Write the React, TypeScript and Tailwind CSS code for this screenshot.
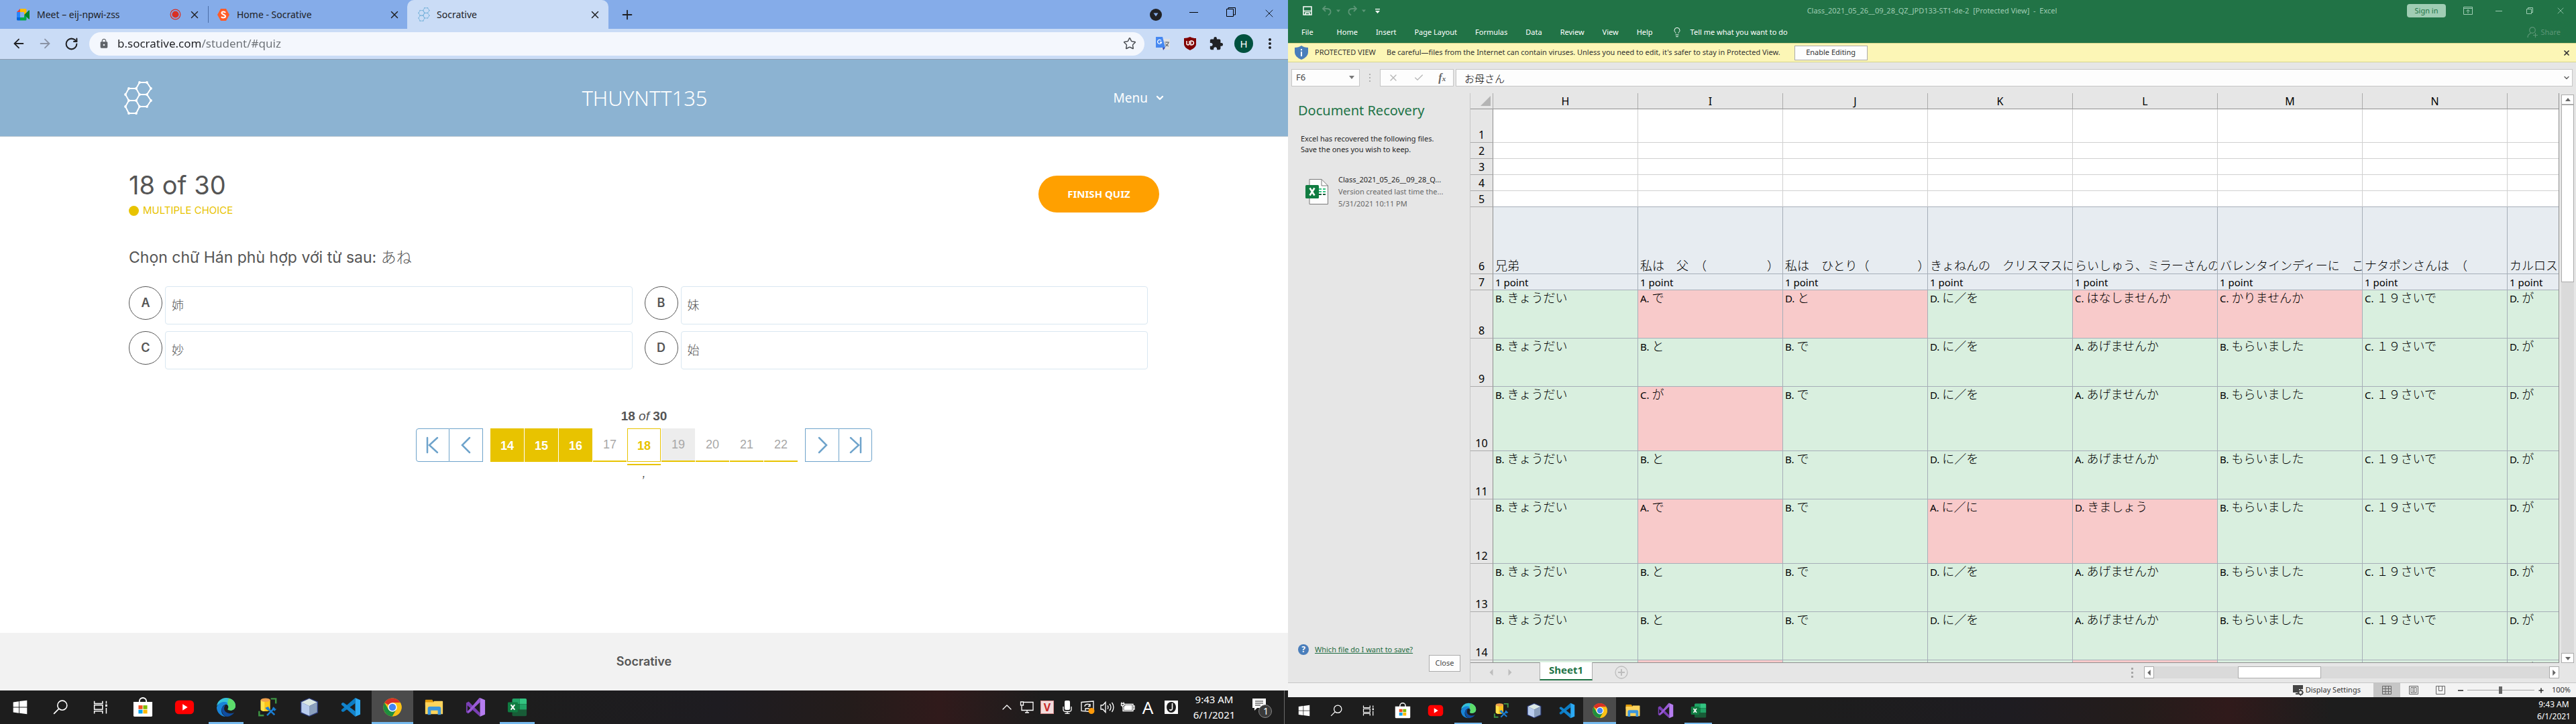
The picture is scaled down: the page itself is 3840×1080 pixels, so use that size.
import React from "react";
import {
  ArrowLeft,
  ArrowRight,
  RotateCw,
  Star,
  X,
  Plus,
  ChevronDown,
  ChevronUp,
  Check,
  Lightbulb,
} from "lucide-react";
import { MdExtension, MdLock, MdMoreVert } from "react-icons/md";

type IconProps = { className?: string };

const HEX_DOTS: [number, number][] = [
  [23, 2], [34, 2], [40, 11], [34, 20], [23, 20], [18, 11], [7, 11], [2, 20],
  [7, 29], [18, 29], [40, 29], [34, 38], [23, 38], [18, 48], [7, 48], [2, 38],
];

function HexLogo({ className }: IconProps) {
  return (
    <svg viewBox="0 0 42 50" className={className} fill="none" stroke="currentColor" strokeWidth="2">
      <path d="M23 2h11l6 9-6 9H23l-5-9zM7 11h11l5 9-5 9H7l-5-9zM23 20h11l6 9-6 9H23l-5-9zM7 29h11l5 9-5 10H7l-5-10z" />
      {HEX_DOTS.map(([x, y]) => (
        <circle key={x + "-" + y} cx={x} cy={y} r="1.9" fill="currentColor" stroke="none" />
      ))}
    </svg>
  );
}

/* ---------- Task bar icons ---------- */

function WindowsIcon({ className }: IconProps) {
  return (
    <svg viewBox="0 0 32 32" className={className} fill="#fff">
      <path d="M5 8l9-1.300v8.800H5zM15 6.500L27 5v10.500H15zM5 16.500h9v8.800L5 24zM15 16.500h12V27l-12-1.600z" />
    </svg>
  );
}
function SearchIcon({ className }: IconProps) {
  return (
    <svg viewBox="0 0 32 32" className={className} fill="none" stroke="#fff" strokeWidth="1.7">
      <circle cx="19" cy="13" r="7.5" />
      <path d="M13.500 18.500L5.500 26.500" />
    </svg>
  );
}
function TaskViewIcon({ className }: IconProps) {
  return (
    <svg viewBox="0 0 32 32" className={className} fill="none" stroke="#fff" strokeWidth="1.6">
      <path d="M6 6v4h13V6M6 26v-4h13v4M6 12.500h13v7H6zM25 6v4M25 17v9" />
      <path d="M25 11.500v3.500" strokeWidth="3" />
    </svg>
  );
}
function StoreIcon({ className }: IconProps) {
  return (
    <svg viewBox="0 0 32 32" className={className}>
      <path d="M10.500 9V6.500a5.500 5.500 0 0 1 11 0V9" fill="none" stroke="#fff" strokeWidth="2" />
      <path d="M1 7.500h30V29a2 2 0 0 1-2 2H3a2 2 0 0 1-2-2z" fill="#fff" />
      <path fill="#f25022" d="M9 13h6.500v6H9z" />
      <path fill="#7fba00" d="M16.500 13H23v6h-6.500z" />
      <path fill="#00a4ef" d="M9 20h6.500v6H9z" />
      <path fill="#ffb900" d="M16.500 20H23v6h-6.500z" />
    </svg>
  );
}
function YoutubeIcon({ className }: IconProps) {
  return (
    <svg viewBox="0 0 32 32" className={className}>
      <rect x="1" y="5" width="30" height="22" rx="6" fill="#f00" />
      <path d="M13 11l8 5-8 5z" fill="#fff" />
    </svg>
  );
}
function EdgeIcon({ className }: IconProps) {
  return (
    <svg viewBox="0 0 32 32" className={className}>
      <path d="M1 15A15 15 0 0 1 16 1c9 0 15 6 15 12.500 0 5-4 7.500-8 7.500-3 0-5-1-4-2.500 1.500-2 1-7.500-5-8.500C8 9 2 11 1 15z" fill="#35c1d8" />
      <path d="M20 1.500C27 3 31 8 31 13.500c0 5-4 7.500-8 7.500-3 0-5-1-4-2.500 2-3 1-6-1-8z" fill="#5ddc6a" />
      <path d="M18 9c-3-2.500-13-3-17 7 0 8 6 15 15 15-6-2-8-7-7-12s5-8 9-7z" fill="#1884d8" />
      <path d="M9.500 17c-1.500 6 2 13 8 14 5-.5 9-3 11.500-6.500-7 3.500-15 0-16-5-.5-3 .5-5 2-7-2 .5-4.500 2-5.500 4.500z" fill="#0f4da0" />
    </svg>
  );
}
function SqlToolsIcon({ className }: IconProps) {
  return (
    <svg viewBox="0 0 32 32" className={className}>
      <path d="M21 2.500h8V10M2.500 22v7H10" fill="none" stroke="#3e9444" strokeWidth="2.6" />
      <path d="M5 4.500v15c0 4 15 4 15 0v-15z" fill="#fcc419" />
      <path d="M5 4.500v15c0 1.500 3 3 6 3v-17z" fill="#ffe34d" />
      <ellipse cx="12.5" cy="4.5" rx="7.5" ry="3" fill="#f0a04b" />
      <path d="M15 17l12 11M27 17L15 29" stroke="#1b7fd4" strokeWidth="2.6" />
      <path d="M12 17l5-2 2 4-3 2zM25 15l1 3 4 1-3 3-4-3z" fill="#1b7fd4" />
    </svg>
  );
}
function CubeIcon({ className }: IconProps) {
  return (
    <svg viewBox="0 0 32 32" className={className}>
      <path d="M16 1l14 6v18l-14 6-14-6V7z" fill="#2b3a78" />
      <path d="M16 2.500L28.500 8 16 14 3.500 8z" fill="#dbe8e4" />
      <path d="M3.500 8L16 14v15.500L3.500 24z" fill="#b9cdee" />
      <path d="M28.500 8L16 14v15.500L28.500 24z" fill="#8ba0bd" />
    </svg>
  );
}
function VsCodeIcon({ className }: IconProps) {
  return (
    <svg viewBox="0 0 32 32" className={className}>
      <path d="M23 1v8.500L5 23l-2 .5L1 22v-2z" fill="#0a7cc4" />
      <path d="M23 31v-8.500L5 9l-2-.5L1 10v2z" fill="#1283cc" />
      <path d="M23 1l8 3.500v23L23 31z" fill="#2ba9f3" />
    </svg>
  );
}
function ChromeIcon({ className }: IconProps) {
  return (
    <svg viewBox="0 0 32 32" className={className}>
      <circle cx="16" cy="16" r="14.5" fill="#fbc116" />
      <path d="M16 16L3.440 8.750A14.500 14.500 0 0 1 28.560 8.750H16z" fill="#d93025" />
      <path d="M3.440 8.750A14.500 14.500 0 0 0 16 30.500L22.300 19.500 9.700 19.500z" fill="#1e8e3e" />
      <path d="M28.560 8.750A14.500 14.500 0 0 1 16 30.500L22.300 19.600 16 8.750z" fill="#fbc116" />
      <circle cx="16" cy="16" r="7.2" fill="#fff" />
      <circle cx="16" cy="16" r="5.6" fill="#4285f4" />
    </svg>
  );
}
function FolderIcon({ className }: IconProps) {
  return (
    <svg viewBox="0 0 32 32" className={className}>
      <path d="M2 5a1 1 0 0 1 1-1h10l2 3v6H2z" fill="#e09a0a" />
      <path d="M2 8h13l1-2h13a1 1 0 0 1 1 1v19a1 1 0 0 1-1 1H3a1 1 0 0 1-1-1z" fill="#fdd45c" />
      <path d="M6 28V18a3 3 0 0 1 3-3h15a3 3 0 0 1 3 3v10h-5v-7H11v7z" fill="#3b96dd" />
    </svg>
  );
}
function VisualStudioIcon({ className }: IconProps) {
  return (
    <svg viewBox="0 0 32 32" className={className}>
      <path d="M1 9l4-2 18 18v6L3 13v9l5-4 3 3-7 5-3-2z" fill="#7a3fb5" />
      <path d="M23 1v7L5 25l-2-2L22 1z" fill="#9a5bd6" />
      <path d="M23 1l8 3.500v23L23 31z" fill="#b67df0" />
    </svg>
  );
}
function ExcelIcon({ className }: IconProps) {
  return (
    <svg viewBox="0 0 32 32" className={className}>
      <path d="M8 4a2 2 0 0 1 2-2h10v9H8z" fill="#21a366" />
      <path d="M20 2h9a2 2 0 0 1 2 2v7H20z" fill="#33c481" />
      <path d="M8 11h12v9H8z" fill="#107c41" />
      <path d="M20 11h11v9H20z" fill="#21a366" />
      <path d="M8 20h23v8a2 2 0 0 1-2 2H10a2 2 0 0 1-2-2z" fill="#185c37" />
      <rect x="1" y="8" width="16" height="16" rx="1.5" fill="#0f7c41" />
      <path d="M6 12l6 8M12 12l-6 8" stroke="#fff" strokeWidth="2.2" />
    </svg>
  );
}

const SYSTEM_ITEMS = [
  { name: "Start", Icon: WindowsIcon },
  { name: "Search", Icon: SearchIcon },
  { name: "Task View", Icon: TaskViewIcon },
];
const PINNED_ITEMS = [
  { name: "Microsoft Store", Icon: StoreIcon, state: "" },
  { name: "YouTube", Icon: YoutubeIcon, state: "" },
  { name: "Edge", Icon: EdgeIcon, state: "open" },
  { name: "SQL Tools", Icon: SqlToolsIcon, state: "" },
  { name: "Virtual Machine", Icon: CubeIcon, state: "" },
  { name: "Visual Studio Code", Icon: VsCodeIcon, state: "" },
  { name: "Chrome", Icon: ChromeIcon, state: "active" },
  { name: "File Explorer", Icon: FolderIcon, state: "" },
  { name: "Visual Studio", Icon: VisualStudioIcon, state: "" },
  { name: "Excel", Icon: ExcelIcon, state: "open" },
];

function TaskbarApps({ large }: { large: boolean }) {
  const icon = large ? "size-[30px]" : "size-6";
  return (
    <div className="flex gap-0.5">
      <div className="flex">
        {SYSTEM_ITEMS.map(({ name, Icon }) => (
          <button key={name} aria-label={name} className={`grid place-items-center ${large ? "w-[60px]" : "w-12"}`}>
            <Icon className={icon} />
          </button>
        ))}
      </div>
      <div className="flex">
        {PINNED_ITEMS.map(({ name, Icon, state }) => (
          <button
            key={name}
            aria-label={name}
            className={`relative grid place-items-center ${large ? "w-[62px]" : "w-[49px]"} ${
              state === "active" ? "bg-[#4b4b4b]" : ""
            }`}
          >
            <Icon className={icon} />
            {state === "active" && <span className="absolute inset-x-0 bottom-0 h-[3px] bg-[#76b9ed]" />}
            {state === "open" && (
              <span
                className={`absolute bottom-0 bg-[#76b9ed] ${large ? "inset-x-[5px] h-[3px]" : "inset-x-1 h-0.5"}`}
              />
            )}
          </button>
        ))}
      </div>
    </div>
  );
}

function Tray() {
  return (
    <div className="flex items-center text-white">
      <button aria-label="Show hidden icons" className="grid w-[30px] place-items-center">
        <ChevronUp className="size-6" strokeWidth={1.3} />
      </button>
      <div className="grid w-[30px] place-items-center">
        <svg viewBox="0 0 22 20" className="h-5 w-[22px]" fill="none" stroke="#fff" strokeWidth="1.3">
          <path d="M5 2.500h15v12H3V8M1.500 2h4v5h-4zM11 14.500V18M8 18h6" />
        </svg>
      </div>
      <div className="grid w-[30px] place-items-center">
        <span className="grid h-5 w-5 place-items-center border border-[#d98c8c] bg-[#f1dcdc] text-base leading-none font-bold text-[#c92a2a]">
          V
        </span>
      </div>
      <div className="grid w-[30px] place-items-center">
        <svg viewBox="0 0 16 20" className="h-5 w-4">
          <rect x="4" y="0" width="8" height="14" rx="2" fill="#fff" />
          <path d="M2 9v5a3 3 0 0 0 3 2.500h6a3 3 0 0 0 3-2.500V9M8 16.500V19M4.500 19.300h7" fill="none" stroke="#fff" strokeWidth="1.3" />
        </svg>
      </div>
      <div className="grid w-[30px] place-items-center">
        <svg viewBox="0 0 22 20" className="h-5 w-[22px]" fill="none" stroke="#fff" strokeWidth="1.3">
          <path d="M2 2.500L20 1v16L2 15.500zM7 9c0-4 7-5 8-1M15 5v3.500h-3M14 12H8v3" />
          <circle cx="17" cy="15.5" r="4.5" fill="#ff9a0a" stroke="none" />
        </svg>
      </div>
      <div className="grid w-[30px] place-items-center">
        <svg viewBox="0 0 22 20" className="h-5 w-[22px]" fill="none" stroke="#fff" strokeWidth="1.3">
          <path d="M1 7h3l4-4.500v15L4 13H1zM11 7.500q2 2.500 0 5M14 5q4 5 0 10M17.500 3q5 7 0 14" />
        </svg>
      </div>
      <div className="grid w-[30px] place-items-center">
        <svg viewBox="0 0 22 20" className="h-5 w-[22px]" fill="none" stroke="#fff" strokeWidth="1.3">
          <path d="M6 5.500h13v10H4V9M19 8h2v5h-2M1.500 4.500h4v3h-4zM3.500 7.500V10M2 2.500v2M5 2.500v2" />
          <path d="M8 7.500h9v6H6v-4z" fill="#fff" />
        </svg>
      </div>
      <div className="w-[30px] text-center text-[26px] leading-none">A</div>
      <div className="grid w-10 place-items-center">
        <svg viewBox="0 0 20 20" className="size-5">
          <rect width="20" height="20" fill="#fff" />
          <ellipse cx="10" cy="10" rx="7" ry="8" fill="#1d1d1d" />
          <path d="M11.500 4v8c0 3-3.500 3-4 1" fill="none" stroke="#fff" strokeWidth="1.6" />
        </svg>
      </div>
      <div className="w-[88px] text-center text-[15px] leading-[23px]">
        9:43 AM
        <br />
        6/1/2021
      </div>
      <button aria-label="Notifications" className="relative ml-1 grid w-11 place-items-center">
        <svg viewBox="0 0 32 32" className="h-8 w-8">
          <path d="M3 3h20v14H10l-4 4v-4H3z" fill="#fff" />
          <path d="M7 7h12M7 10h12M7 13h8" stroke="#1d1d1d" strokeWidth="1.2" />
          <circle cx="22" cy="22" r="9.5" fill="#3a3a3a" stroke="#8a8a8a" />
        </svg>
        <span className="absolute top-[10px] left-[25px] text-sm leading-6">1</span>
      </button>
      <span className="mr-[5px] ml-3 h-[50px] w-px bg-[#6b6b6b]" />
    </div>
  );
}

/* ---------- Browser window ---------- */

function MeetIcon() {
  return (
    <svg viewBox="0 0 20 18" className="h-[18px] w-5">
      <path d="M0 5l5-5v5z" fill="#ea4335" />
      <path d="M5 0h8a1.500 1.500 0 0 1 1.500 1.500V8L11 9V5H5z" fill="#fbbc04" />
      <path d="M0 5h5v8H0z" fill="#2684fc" />
      <path d="M0 13h5v4.500H1.500A1.500 1.500 0 0 1 0 16z" fill="#0066da" />
      <path d="M5 13h6v-3l3.500-1v7a1.500 1.500 0 0 1-1.500 1.500H5z" fill="#00ac47" />
      <path d="M11 9l7-6.500q1-.5 1 .5v12q0 1-1 .5z" fill="#00832d" />
    </svg>
  );
}

function ChromeBar() {
  return (
    <>
      <div className="flex h-[43px] bg-[#85ace9] text-sm text-[#202124]">
        <div className="flex w-[310px] items-center pr-[11px] pl-[25px]">
          <MeetIcon />
          <span className="ml-[10px] flex-1 whitespace-nowrap">Meet – eij-npwi-zss</span>
          <svg viewBox="0 0 18 18" className="mr-[11px] size-[17px]">
            <circle cx="9" cy="9" r="7.8" fill="none" stroke="#d93025" strokeWidth="1.3" />
            <circle cx="9" cy="9" r="5.4" fill="#d93025" />
          </svg>
          <button aria-label="Close tab">
            <X className="size-[18px]" />
          </button>
        </div>
        <span className="my-[9px] w-px bg-[#4b6ea8]" />
        <div className="flex w-[296px] items-center pr-[10px] pl-[13px]">
          <svg viewBox="0 0 18 18" className="size-[18px]">
            <path d="M5 0h8l5 9-5 9H5L0 9z" fill="#ff5c28" />
            <path d="M12 6c-1-2-5.500-2-5.500.500S12 8.500 12 11.200 7 14 6 12" fill="none" stroke="#fff" strokeWidth="2" />
          </svg>
          <span className="ml-[11px] flex-1">Home - Socrative</span>
          <button aria-label="Close tab">
            <X className="size-[18px]" />
          </button>
        </div>
        <div className="flex w-[300px] items-center rounded-t-[10px] bg-[#cadcf6] pr-[11px] pl-4">
          <HexLogo className="h-[21px] w-[18px] text-[#76b2da]" />
          <span className="ml-[10px] flex-1">Socrative</span>
          <button aria-label="Close tab">
            <X className="size-[18px]" />
          </button>
        </div>
        <button aria-label="New tab" className="ml-[17px]">
          <Plus className="size-[22px]" />
        </button>
        <div className="ml-auto flex items-center text-black">
          <button aria-label="Tab search" className="grid w-14 place-items-center">
            <svg viewBox="0 0 18 18" className="size-[18px]">
              <circle cx="9" cy="9" r="9" fill="#202124" />
              <path d="M5.500 6.500h7L9 11.500z" fill="#85ace9" />
            </svg>
          </button>
          <button aria-label="Minimize" className="grid h-4 w-14 place-items-center self-start mt-[10px]">
            <span className="h-px w-[13px] bg-black" />
          </button>
          <button aria-label="Restore" className="grid h-4 w-14 place-items-center self-start mt-[10px]">
            <svg viewBox="0 0 14 14" className="size-[14px]" fill="none" stroke="#000">
              <path d="M.5 2.500h10v11H.5zM3 2.500v-2h10.500v10.500h-3" />
            </svg>
          </button>
          <button aria-label="Close" className="grid h-4 w-[57px] place-items-center self-start mt-[10px]">
            <X className="size-5" strokeWidth={1} />
          </button>
        </div>
      </div>
      <div className="flex h-[46px] items-center border-b border-[#8e9bb0] bg-[#cadcf6] pb-px text-[#202124]">
        <button aria-label="Back" className="ml-[17px]">
          <ArrowLeft className="size-[22px]" />
        </button>
        <button aria-label="Forward" className="ml-[17px] text-[#8a93a5]">
          <ArrowRight className="size-[22px]" />
        </button>
        <button aria-label="Reload" className="ml-[18px]">
          <RotateCw className="size-[21px]" strokeWidth={2.3} />
        </button>
        <div className="ml-4 flex h-[35px] flex-1 items-center rounded-full bg-[#f4f7fd] pr-3 pl-[14px]">
          <MdLock className="size-4 text-[#5f6368]" />
          <input
            aria-label="Address"
            defaultValue="b.socrative.com/student/#quiz"
            className="ml-3 flex-1 bg-[linear-gradient(to_right,#202124_126px,#6b7075_126px)] bg-clip-text text-[17px] text-transparent outline-none"
          />
          <Star className="size-5 text-[#4d5156]" strokeWidth={1.8} />
        </div>
        <div className="ml-4 flex items-center">
          <svg viewBox="0 0 22 22" className="size-[22px]">
            <rect x="9" y="4" width="13" height="16" fill="#dfe1e5" />
            <path d="M1 1h10l4 16H1z" fill="#4688f1" />
            <path d="M11 17h4l-3 4z" fill="#3949ab" />
            <path d="M9 6.500A3 3 0 1 0 9.500 9H7" fill="none" stroke="#fff" strokeWidth="1.3" />
            <path d="M14 9h7M17.500 8v2M20 9q-1 4-5 6M15 11q2 3 5 4" fill="none" stroke="#6b7075" strokeWidth="1.1" />
          </svg>
          <svg viewBox="0 0 20 22" className="ml-5 h-[22px] w-5">
            <path d="M10 1q4 2 9 2v9q0 5-9 9-9-4-9-9V3q5 0 9-2z" fill="#800000" />
            <path d="M5 7v5q2 2 4 0V7M11 7v6h1.500q3-.5 3-3t-3-3z" fill="none" stroke="#fff" strokeWidth="1.5" />
          </svg>
          <MdExtension className="ml-[18px] size-[22px]" />
          <span className="ml-4 grid size-7 place-items-center rounded-full bg-[#00513f] text-[15px] text-white">H</span>
          <button aria-label="Browser menu" className="mr-[15px] ml-[13px]">
            <MdMoreVert className="size-6" />
          </button>
        </div>
      </div>
    </>
  );
}

const OPTIONS = [
  { letter: "A", text: "姉" },
  { letter: "B", text: "妹" },
  { letter: "C", text: "妙" },
  { letter: "D", text: "始" },
];

const PAGES = [14, 15, 16, 17, 18, 19, 20, 21, 22];

function pageClass(n: number) {
  if (n < 17) return "bg-[#e8c300] font-bold text-white pt-0.5";
  if (n === 18) return "border border-[#e8c300] bg-white font-bold text-[#e8c300] pt-0.5";
  if (n === 19) return "border-b-2 border-[#e8c300] bg-[#ededed] text-[#a8a8a8]";
  return "border-b-2 border-[#e8c300] text-[#a8a8a8]";
}

function Quiz() {
  return (
    <>
      <header className="grid h-[115px] grid-cols-3 items-center border-b border-[#b9c7d1] bg-[#8cb3d2] pr-[183px] pl-[185px] text-white">
        <HexLogo className="h-[50px] w-[42px]" />
        <h1 className="text-center text-[31px] leading-10 font-light">THUYNTT135</h1>
        <button className="flex items-center gap-[10px] justify-self-end text-[19px]">
          Menu <ChevronDown className="size-4" strokeWidth={3.5} />
        </button>
      </header>
      <main className="flex-1 px-48 font-[Inter,'Noto_Sans_CJK_JP',sans-serif] text-[#555]">
        <div className="flex items-start justify-between pt-12">
          <div>
            <h2 className="text-[38px] leading-12">18 of 30</h2>
            <p className="mt-0.5 flex items-center gap-[6px] text-[15px] leading-6 text-[#e8c300]">
              <span className="size-[15px] rounded-full bg-[#e8c300]" />
              MULTIPLE CHOICE
            </p>
          </div>
          <button className="mt-[10px] h-[55px] w-[180px] rounded-[28px] bg-[#ffa000] font-['Noto_Sans',sans-serif] text-[15px] font-bold text-white">
            FINISH QUIZ
          </button>
        </div>
        <p className="mt-[42px] text-[23px] leading-8">
          Chọn chữ Hán phù hợp với từ sau: <span className="font-light">あね</span>
        </p>
        <div className="mt-[27px] mr-[17px] grid grid-cols-2 gap-x-[18px] gap-y-[10px]">
          {OPTIONS.map((o) => (
            <button key={o.letter} className="flex items-start gap-1 text-left">
              <span className="grid size-[50px] place-items-center rounded-full border border-[#555] text-lg font-semibold">
                {o.letter}
              </span>
              <span className="flex h-[57px] flex-1 items-center rounded border border-[#d9e7f1] px-[9px] text-lg font-light">
                {o.text}
              </span>
            </button>
          ))}
        </div>
        <nav aria-label="Questions" className="mt-[57px] flex flex-col items-center font-['Liberation_Sans',sans-serif]">
          <p className="text-[19px] leading-[26px]">
            <b>18</b> <i>of</i> <b>30</b>
          </p>
          <div className="mt-[5px] flex gap-[11px] text-[#6ea3cb]">
            <div className="flex">
              <button aria-label="First" className="grid size-[50px] place-items-center rounded-l border border-[#6ea3cb]">
                <svg viewBox="0 0 20 26" className="h-[26px] w-5" fill="none" stroke="currentColor" strokeWidth="2.5" strokeLinecap="round">
                  <path d="M2 2v22M17 2L5 13l12 11" />
                </svg>
              </button>
              <button aria-label="Previous" className="grid size-[50px] place-items-center border border-l-0 border-[#6ea3cb]">
                <svg viewBox="0 0 20 26" className="h-[26px] w-5" fill="none" stroke="currentColor" strokeWidth="2.5" strokeLinecap="round">
                  <path d="M15 2L4 13l11 11" />
                </svg>
              </button>
            </div>
            <div className="flex gap-px">
              {PAGES.map((n) => (
                <div key={n} className={n === 18 ? "border-b-2 border-[#e8c300] pb-[3px]" : ""}>
                  <button className={`block h-[50px] w-[50px] text-lg ${pageClass(n)}`}>{n}</button>
                </div>
              ))}
            </div>
            <div className="flex">
              <button aria-label="Next" className="grid size-[50px] place-items-center border border-r-0 border-[#6ea3cb]">
                <svg viewBox="0 0 20 26" className="h-[26px] w-5" fill="none" stroke="currentColor" strokeWidth="2.5" strokeLinecap="round">
                  <path d="M5 2l11 11L5 24" />
                </svg>
              </button>
              <button aria-label="Last" className="grid size-[50px] place-items-center rounded-r border border-[#6ea3cb]">
                <svg viewBox="0 0 20 26" className="h-[26px] w-5" fill="none" stroke="currentColor" strokeWidth="2.5" strokeLinecap="round">
                  <path d="M18 2v22M3 2l12 11L3 24" />
                </svg>
              </button>
            </div>
          </div>
          <p className="text-lg leading-6 italic">,</p>
        </nav>
      </main>
      <footer className="grid h-[86px] place-items-center bg-[#f2f2f2] font-[Inter,sans-serif] text-lg font-semibold text-[#555]">
        Socrative
      </footer>
    </>
  );
}

/* ---------- Spreadsheet window ---------- */

const COLUMNS = ["H", "I", "J", "K", "L", "M", "N", ""];
const QUESTIONS = [
  "兄弟",
  "私は　父　（　　　　　）",
  "私は　ひとり（　　　　）",
  "きょねんの　クリスマスに",
  "らいしゅう、ミラーさんの",
  "バレンタインディーに　こ",
  "ナタポンさんは　（",
  "カルロス",
];

type Answer = { key: string; text: string; wrong?: boolean };
const ok = (key: string, text: string): Answer => ({ key, text });
const bad = (key: string, text: string): Answer => ({ key, text, wrong: true });

const BASE: Answer[] = [
  ok("B.", "きょうだい"),
  ok("B.", "と"),
  ok("B.", "で"),
  ok("D.", "に／を"),
  ok("A.", "あげませんか"),
  ok("B.", "もらいました"),
  ok("C.", "１９さいで"),
  ok("D.", "が"),
];
const withAnswers = (changes: Record<number, Answer>) => BASE.map((a, i) => changes[i] ?? a);

const ANSWER_ROWS: { n: number; height: string; cells: Answer[] }[] = [
  {
    n: 8,
    height: "h-[72px]",
    cells: withAnswers({
      1: bad("A.", "で"),
      2: bad("D.", "と"),
      4: bad("C.", "はなしませんか"),
      5: bad("C.", "かりませんか"),
    }),
  },
  { n: 9, height: "h-[72px]", cells: BASE },
  { n: 10, height: "h-[96px]", cells: withAnswers({ 1: bad("C.", "が") }) },
  { n: 11, height: "h-[72px]", cells: BASE },
  {
    n: 12,
    height: "h-[96px]",
    cells: withAnswers({ 1: bad("A.", "で"), 3: bad("A.", "に／に"), 4: bad("D.", "きましょう") }),
  },
  { n: 13, height: "h-[72px]", cells: BASE },
  { n: 14, height: "h-[72px]", cells: BASE },
  { n: 15, height: "h-[72px]", cells: withAnswers({ 1: bad("A.", "で"), 4: bad("C.", "はなしませんか") }) },
];

function RowHeader({ n }: { n: number }) {
  return (
    <th
      scope="row"
      className="border-r border-b border-r-[#8f8f8f] border-b-[#ababab] bg-[#e6e6e6] p-0 text-center align-bottom text-base leading-[22px] font-normal"
    >
      {n}
    </th>
  );
}

function Sheet() {
  return (
    <div className="min-h-0 flex-1 overflow-hidden border-r border-b border-[#8f8f8f]">
      <table className="w-full table-fixed border-separate border-spacing-0 text-[15px] text-black">
        <colgroup>
          <col className="w-[34px]" />
          {COLUMNS.slice(0, -1).map((c) => (
            <col key={c} className="w-[216px]" />
          ))}
          <col />
        </colgroup>
        <thead>
          <tr className="h-6 bg-[#e6e6e6]">
            <th className="border-r border-b border-r-[#ababab] border-b-[#8f8f8f] p-0">
              <svg viewBox="0 0 16 16" className="mr-0.5 ml-auto size-4" fill="#b4b4b4">
                <path d="M15 0v15H0z" />
              </svg>
            </th>
            {COLUMNS.map((c) => (
              <th
                key={c}
                className="border-r border-b border-r-[#ababab] border-b-[#8f8f8f] p-0 text-base leading-[22px] font-normal last:border-r-0"
              >
                {c}
              </th>
            ))}
          </tr>
        </thead>
        <tbody>
          {[1, 2, 3, 4, 5].map((n) => (
            <tr key={n} className={n === 1 ? "h-[50px]" : "h-6"}>
              <RowHeader n={n} />
              {COLUMNS.map((c) => (
                <td
                  key={c}
                  className={`border-r border-b border-r-[#d0d0d0] bg-white p-0 last:border-r-0 ${
                    n === 5 ? "border-b-[#a6aeb8]" : "border-b-[#d0d0d0]"
                  }`}
                />
              ))}
            </tr>
          ))}
          <tr className="h-[100px]">
            <RowHeader n={6} />
            {QUESTIONS.map((q) => (
              <td
                key={q}
                className="overflow-hidden border-r border-b border-[#a6aeb8] bg-[#e7ecf1] p-0 pl-[3px] align-bottom text-lg leading-6 font-light whitespace-nowrap last:border-r-0"
              >
                {q}
              </td>
            ))}
          </tr>
          <tr className="h-6">
            <RowHeader n={7} />
            {COLUMNS.map((c) => (
              <td key={c} className="border-r border-b border-[#a6aeb8] bg-[#e7ecf1] p-0 pl-[3px] leading-[22px] last:border-r-0">
                1 point
              </td>
            ))}
          </tr>
          {ANSWER_ROWS.map((row) => (
            <tr key={row.n} className={row.height}>
              <RowHeader n={row.n} />
              {row.cells.map((a, i) => (
                <td
                  key={i}
                  className={`overflow-hidden border-r border-b border-[#a6aeb8] p-0 pl-[3px] align-top leading-[22px] whitespace-nowrap last:border-r-0 ${
                    a.wrong ? "bg-[#f8caca]" : "bg-[#d9efdf]"
                  }`}
                >
                  {a.key} <span className="text-lg leading-[22px] font-light">{a.text}</span>
                </td>
              ))}
            </tr>
          ))}
        </tbody>
      </table>
    </div>
  );
}

function Triangle({ className, points }: { className: string; points: string }) {
  return (
    <svg viewBox="0 0 8 8" className={className} fill="currentColor">
      <polygon points={points} />
    </svg>
  );
}

function ExcelTop() {
  return (
    <header className="bg-[#217346] text-[11px] text-white">
      <div className="grid h-8 grid-cols-[1fr_auto_1fr] items-center">
        <div className="flex items-center pl-[22px] text-[#5c9676]">
          <button aria-label="Save">
            <svg viewBox="0 0 14 14" className="size-[14px]" fill="none" stroke="#fff" strokeWidth="1.5">
              <path d="M1 1h12v12H1zM1 7.500h12M4 13v-3h6v3" />
            </svg>
          </button>
          <button aria-label="Undo" className="ml-[14px]">
            <svg viewBox="0 0 16 16" className="size-4" fill="none" stroke="currentColor" strokeWidth="1.8">
              <path d="M6 1L2 5l4 4M2 5h6c7 0 7 7 2 9.500" />
            </svg>
          </button>
          <Triangle className="ml-[6px] size-[6px]" points="0,2 8,2 4,7" />
          <button aria-label="Redo" className="ml-[10px]">
            <svg viewBox="0 0 16 16" className="size-4" fill="none" stroke="currentColor" strokeWidth="1.8">
              <path d="M10 1l4 4-4 4M14 5H8C1 5 1 12 6 14.500" />
            </svg>
          </button>
          <Triangle className="ml-[6px] size-[6px]" points="0,2 8,2 4,7" />
          <svg viewBox="0 0 8 8" className="ml-[14px] size-[7px]" fill="#fff">
            <path d="M0 0h8v1.500H0zM0 3.500h8L4 8z" />
          </svg>
        </div>
        <div className="text-[#a0cdb4]">Class_2021_05_26__09_28_QZ_JPD133-ST1-de-2&nbsp; [Protected View]&nbsp; -&nbsp; Excel</div>
        <div className="flex items-center justify-end text-[#a0cdb4]">
          <button className="h-5 w-[58px] rounded-sm bg-[#a0cdb4] text-[#217346]">Sign in</button>
          <button aria-label="Ribbon options" className="ml-[10px] grid w-[46px] place-items-center">
            <svg viewBox="0 0 14 12" className="h-3 w-[14px]" fill="none" stroke="currentColor">
              <path d="M.5.500h13v11H.5zM.5 2.500h13M7 10V4.500M4.500 7L7 4.500 9.500 7" />
            </svg>
          </button>
          <button aria-label="Minimize" className="grid h-4 w-[46px] place-items-center">
            <span className="h-px w-[10px] bg-[#a0cdb4]" />
          </button>
          <button aria-label="Restore" className="grid w-[46px] place-items-center">
            <svg viewBox="0 0 10 10" className="size-[10px]" fill="none" stroke="currentColor">
              <path d="M.5 2.500h7v7h-7zM2.500 2.500v-2h7v7h-2" />
            </svg>
          </button>
          <button aria-label="Close" className="grid w-[46px] place-items-center">
            <X className="size-4" strokeWidth={1.2} />
          </button>
        </div>
      </div>
      <nav className="flex h-8 items-center pl-5">
        <div className="flex gap-[27px]">
          <button className="mr-2">File</button>
          {["Home", "Insert", "Page Layout", "Formulas", "Data", "Review", "View", "Help"].map((m) => (
            <button key={m}>{m}</button>
          ))}
        </div>
        <button className="ml-7 flex items-center gap-3">
          <Lightbulb className="size-4" strokeWidth={1.5} />
          Tell me what you want to do
        </button>
        <button className="mr-[23px] ml-auto flex items-center gap-1 text-[#5c9676]">
          <svg viewBox="0 0 16 16" className="size-4" fill="none" stroke="currentColor" strokeWidth="1.2">
            <circle cx="8" cy="5" r="4.3" />
            <path d="M1 16q0-5 5-6.500M12.500 9v7M9 12.500h7" />
          </svg>
          Share
        </button>
      </nav>
    </header>
  );
}

function ProtectedBar() {
  return (
    <div className="flex h-[29px] items-center border-y border-[#d6d58e] bg-[#fcf6b6] pl-[10px] text-[11px] text-[#333]">
      <svg viewBox="0 0 20 21" className="h-[21px] w-5">
        <path d="M10 0q4 3 10 3v7q0 7-10 11Q0 17 0 10V3q6 0 10-3z" fill="#4a7ebb" />
        <path d="M10 5v2.200M10 9v7" stroke="#fff" strokeWidth="2" />
      </svg>
      <span className="ml-[10px] w-[97px] whitespace-nowrap">PROTECTED VIEW</span>
      <span className="ml-[10px]">
        Be careful—files from the Internet can contain viruses. Unless you need to edit, it's safer to stay in Protected View.
      </span>
      <button className="ml-[21px] h-[22px] w-[109px] border border-[#ababab] bg-[#fdfdfd]">Enable Editing</button>
      <button aria-label="Dismiss" className="mr-2 ml-auto">
        <X className="size-3" strokeWidth={3.5} />
      </button>
    </div>
  );
}

function FormulaBar() {
  return (
    <div className="flex h-[26px] px-[5px] text-[13px] text-[#444]">
      <div className="relative w-[102px]">
        <select aria-label="Name box" className="h-full w-full appearance-none border border-[#c6c6c6] bg-[#fdfdfd] pl-[6px]">
          <option>F6</option>
        </select>
        <Triangle className="pointer-events-none absolute top-2 right-2 size-2 text-[#777]" points="0,2 8,2 4,7" />
      </div>
      <div className="grid w-[30px] content-center justify-center gap-[3px]">
        {[0, 1, 2].map((i) => (
          <span key={i} className="size-0.5 bg-[#b0b0b0]" />
        ))}
      </div>
      <div className="flex w-[110px] items-center justify-around border border-[#c6c6c6] bg-[#fdfdfd] text-[#b8b8b8]">
        <button aria-label="Cancel">
          <X className="size-4" />
        </button>
        <button aria-label="Enter">
          <Check className="size-4" />
        </button>
        <button aria-label="Insert function" className="font-['Liberation_Serif',serif] text-base leading-none font-bold text-[#666] italic">
          f<span className="text-[11px]">x</span>
        </button>
      </div>
      <div className="relative ml-[3px] flex-1">
        <input
          aria-label="Formula"
          defaultValue="お母さん"
          className="h-full w-full border border-[#c6c6c6] bg-[#fdfdfd] px-3 text-[15px] font-light text-black outline-none"
        />
        <ChevronDown className="absolute top-[7px] right-[3px] size-3 text-[#666]" strokeWidth={3} />
      </div>
    </div>
  );
}

function RecoveryPanel() {
  return (
    <aside className="flex w-[272px] flex-col border-r border-[#c6c6c6] text-[11px] text-[#262626]">
      <h2 className="mt-[10px] pl-[15px] text-xl leading-8 text-[#217346]">Document Recovery</h2>
      <p className="mt-[18px] pl-[19px] leading-4">
        Excel has recovered the following files.
        <br />
        Save the ones you wish to keep.
      </p>
      <button className="mt-7 flex items-center gap-[15px] pl-[26px] text-left">
        <svg viewBox="0 0 34 38" className="h-[38px] w-[34px]">
          <path d="M6 .5h18L33.500 10v27.500H6z" fill="#fdfdfd" stroke="#7a7a7a" />
          <path d="M24 .5V10h9.500" fill="none" stroke="#7a7a7a" />
          <path d="M20 14h4v2h-4zM26 14h4v2h-4zM20 18h4v2h-4zM26 18h4v2h-4z" fill="#33c481" />
          <path d="M20 22h4v2h-4zM26 22h4v2h-4z" fill="#185c37" />
          <rect x="0" y="9" width="20" height="20" rx="1.5" fill="#107c41" />
          <path d="M6.500 13.500l7 11M13.500 13.500l-7 11" stroke="#fff" strokeWidth="2.6" />
        </svg>
        <span className="leading-[18px] text-[#666]">
          <span className="text-[#262626]">Class_2021_05_26__09_28_Q...</span>
          <br />
          Version created last time the...
          <br />
          5/31/2021 10:11 PM
        </span>
      </button>
      <div className="mt-auto flex items-center gap-[9px] pl-[15px]">
        <span className="grid size-4 place-items-center rounded-full bg-[#4a7ebb] text-xs font-bold text-white">?</span>
        <a href="#save" className="text-[#1e6b41] underline">
          Which file do I want to save?
        </a>
      </div>
      <button className="mr-[14px] mb-[15px] h-[25px] w-[47px] self-end border border-[#ababab] bg-[#fdfdfd] text-[#444]">
        Close
      </button>
    </aside>
  );
}

function VerticalScroll() {
  return (
    <div className="mt-0.5 mr-[3px] ml-[3px] flex w-[19px] flex-col bg-[#dadada] text-[#666]">
      <button aria-label="Scroll up" className="grid h-[15px] place-items-center border border-[#ababab] bg-white">
        <Triangle className="size-2" points="0,6 8,6 4,1" />
      </button>
      <div className="h-[265px] border border-[#ababab] bg-white" />
      <button aria-label="Scroll down" className="mt-auto grid h-[15px] place-items-center border border-[#ababab] bg-white">
        <Triangle className="size-2" points="0,2 8,2 4,7" />
      </button>
    </div>
  );
}

function SheetTabs() {
  return (
    <div className="flex h-7 shrink-0 pr-[25px] text-[#bdbdbd]">
      <button aria-label="Previous sheet" className="ml-[26px]">
        <Triangle className="size-[10px]" points="6,0 6,8 2,4" />
      </button>
      <button aria-label="Next sheet" className="ml-[18px]">
        <Triangle className="size-[10px]" points="2,0 2,8 6,4" />
      </button>
      <button className="-mt-px mb-[2px] ml-[39px] w-[79px] border-x border-b-2 border-x-[#ababab] border-b-[#217346] bg-white pb-[3px] text-[15px] leading-5 font-bold text-[#217346]">
        Sheet1
      </button>
      <button aria-label="New sheet" className="ml-[33px]">
        <svg viewBox="0 0 20 20" className="size-5" fill="none" stroke="currentColor" strokeWidth="1.3">
          <circle cx="10" cy="10" r="9" />
          <path d="M10 5v10M5 10h10" strokeWidth="2" />
        </svg>
      </button>
      <div className="mr-4 ml-auto grid content-center gap-[3px]">
        {[0, 1, 2].map((i) => (
          <span key={i} className="h-[3px] w-[3px] bg-[#a6a6a6]" />
        ))}
      </div>
      <div className="my-[5px] flex w-[619px] bg-[#dadada] text-[#666]">
        <button aria-label="Scroll left" className="grid w-[15px] place-items-center border border-[#ababab] bg-white">
          <Triangle className="size-[9px]" points="6,0 6,8 2,4" />
        </button>
        <div className="ml-[125px] w-[124px] border border-[#ababab] bg-white" />
        <button aria-label="Scroll right" className="ml-auto grid w-[15px] place-items-center border border-[#ababab] bg-white">
          <Triangle className="size-[9px]" points="2,0 2,8 6,4" />
        </button>
      </div>
    </div>
  );
}

function StatusBar() {
  return (
    <div className="flex h-[22px] items-center justify-end border-t border-[#c6c6c6] bg-[#f3f3f3] pr-2 text-[11px] text-[#333]">
      <button className="mr-[19px] flex items-center gap-[3px]">
        <svg viewBox="0 0 16 16" className="size-4" fill="#444">
          <path d="M0 0h15v6H9v5H0zM4 12h4v2H4z" />
          <circle cx="11.5" cy="11" r="3" fill="none" stroke="#444" strokeWidth="1.8" />
          <path d="M11 6h1v2h-1zM11 14h1v2h-1zM6.500 10.500h2v1h-2zM14.500 10.500h1.500v1h-1.500z" />
        </svg>
        Display Settings
      </button>
      <button aria-label="Normal view" className="grid h-full w-10 place-items-center bg-[#c6c6c6]">
        <svg viewBox="0 0 14 13" className="h-[13px] w-[14px]" fill="none" stroke="#666">
          <path d="M.5.500h13v12H.5zM.5 4.500h13M.5 8.500h13M5 .5v12M9.500.500v12" />
        </svg>
      </button>
      <button aria-label="Page layout view" className="grid w-10 place-items-center">
        <svg viewBox="0 0 14 13" className="h-[13px] w-[14px]" fill="none" stroke="#666">
          <path d="M.5.500h13v12H.5zM3 2.500h8v8H3zM5 4.500h4M5 6.500h4M5 8.500h4" />
        </svg>
      </button>
      <button aria-label="Page break view" className="grid w-10 place-items-center">
        <svg viewBox="0 0 14 13" className="h-[13px] w-[14px]" fill="none" stroke="#666">
          <path d="M.5.500h13v12H.5zM4.500.500v7h5v-7" />
        </svg>
      </button>
      <button aria-label="Zoom out" className="ml-[6px] grid h-4 w-[9px] place-items-center">
        <span className="h-0.5 w-2 bg-[#555]" />
      </button>
      <input
        type="range"
        aria-label="Zoom"
        defaultValue={50}
        className="mx-[5px] h-px w-[100px] appearance-none bg-[#a6a6a6] [&::-webkit-slider-thumb]:h-[11px] [&::-webkit-slider-thumb]:w-[5px] [&::-webkit-slider-thumb]:appearance-none [&::-webkit-slider-thumb]:bg-[#666]"
      />
      <button aria-label="Zoom in">
        <Plus className="size-[10px]" strokeWidth={4} />
      </button>
      <span className="ml-[11px]">100%</span>
    </div>
  );
}

export default function App() {
  return (
    <div className="flex h-screen overflow-hidden font-['Noto_Sans','Noto_Sans_CJK_JP',sans-serif]">
      <section className="flex min-w-0 flex-1 flex-col bg-white">
        <ChromeBar />
        <Quiz />
        <div className="flex h-[50px] justify-between bg-[linear-gradient(to_right,#1d1d1d_40%,#1e1c21_56%,#241c1b_66%,#301a1b_73%,#1d1d1d_81%)]">
          <TaskbarApps large />
          <Tray />
        </div>
      </section>
      <section className="flex min-w-0 flex-1 flex-col bg-[#e6e6e6]">
        <ExcelTop />
        <ProtectedBar />
        <div className="mt-[10px]">
          <FormulaBar />
        </div>
        <div className="mt-[10px] flex min-h-0 flex-1 pb-px">
          <RecoveryPanel />
          <div className="flex min-w-0 flex-1 flex-col">
            <div className="flex min-h-0 flex-1">
              <Sheet />
              <VerticalScroll />
            </div>
            <SheetTabs />
          </div>
        </div>
        <StatusBar />
        <div className="flex h-10 justify-between bg-[linear-gradient(to_right,#1d1d1d_40%,#1e1c21_56%,#241c1b_66%,#301a1b_73%,#1d1d1d_81%)]">
          <TaskbarApps large={false} />
          <div className="self-center pr-2 text-center text-[12px] leading-[18px] text-white">
            9:43 AM
            <br />
            6/1/2021
          </div>
        </div>
      </section>
    </div>
  );
}
